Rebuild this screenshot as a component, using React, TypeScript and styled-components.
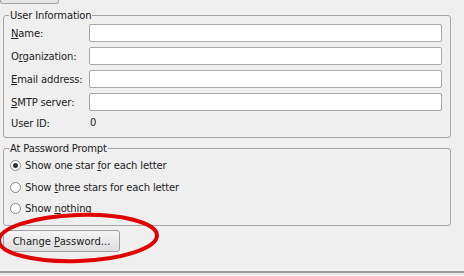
import * as React from 'react';
import styled, { createGlobalStyle } from 'styled-components';

const GlobalStyle = createGlobalStyle`
  html, body {
    margin: 0;
    padding: 0;
    background: #efefef;
  }
  body {
    font-family: "DejaVu Sans", "Liberation Sans", sans-serif;
    font-size: 10px;
    letter-spacing: -0.15px;
    color: #222;
  }
`;

const Page = styled.div`
  position: relative;
  width: 464px;
  height: 276px;
  overflow: hidden;
  display: flex;
  flex-direction: column;
`;

const TopButtonStub = styled.div`
  width: 57px;
  height: 3px;
  border: 1px solid #a4a4a4;
  border-top: none;
  border-radius: 0 0 3px 3px;
  background: #e4e4e4;
  margin-bottom: 5px;
`;

const Group = styled.fieldset<{ $height: number; $gap?: number }>`
  margin: ${(p) => p.$gap ?? 0}px 13px 0 3px;
  padding: 0 8px 0 7px;
  height: ${(p) => p.$height}px;
  box-sizing: border-box;
  border: 1px solid #a6a6a6;
  border-radius: 3px;
  min-width: 0;
`;

const Legend = styled.legend`
  padding: 0 1px;
  margin-left: -2px;
  line-height: 13px;
  font-size: 10px;
`;

const FormGrid = styled.div`
  display: grid;
  grid-template-columns: 78px 1fr;
  row-gap: 5px;
  align-items: center;
  margin-top: 2px;
`;

const Label = styled.span`
  white-space: nowrap;
`;

const TextInput = styled.input`
  height: 18px;
  box-sizing: border-box;
  border: 1px solid #a8a8a8;
  border-radius: 2px;
  background: #fff;
  margin: 0;
  padding: 0 3px;
  font: inherit;
  width: 100%;
`;

const Value = styled.span`
  padding-left: 1px;
  height: 14px;
  line-height: 14px;
`;

const RadioList = styled.div`
  display: flex;
  flex-direction: column;
  gap: 8px;
  margin: 4px 0 0 -1px;
`;

const RadioRow = styled.label`
  display: flex;
  align-items: center;
  gap: 4px;
  height: 13.5px;
`;

const RadioDot = styled.span<{ $checked?: boolean }>`
  width: 11px;
  height: 11px;
  box-sizing: border-box;
  border: 1px solid #8a8a8a;
  border-radius: 50%;
  background: #fff;
  display: flex;
  align-items: center;
  justify-content: center;
  &::after {
    content: '';
    width: 5px;
    height: 5px;
    border-radius: 50%;
    background: ${(p) => (p.$checked ? '#333' : 'transparent')};
  }
`;

const PushButton = styled.button`
  margin: 4px 0 0 3px;
  width: 117px;
  height: 22px;
  border: 1px solid #a0a0a0;
  border-radius: 3px;
  background: linear-gradient(#f4f4f4, #dedede);
  font: inherit;
  color: #222;
  padding: 0;
  text-align: center;
`;

const Spacer = styled.div`
  flex: 1;
`;

const BottomEdge = styled.div`
  height: 2px;
  border-top: 2px solid #9c9c9c;
  background: #e8e8e8;
  margin-bottom: 1px;
`;

const Annotation = styled.svg`
  position: absolute;
  left: 0;
  top: 0;
  pointer-events: none;
`;

const fields = [
  { pre: '', key: 'N', post: 'ame:' },
  { pre: 'O', key: 'r', post: 'ganization:' },
  { pre: '', key: 'E', post: 'mail address:' },
  { pre: '', key: 'S', post: 'MTP server:' },
];

const App = () => (
  <Page>
    <GlobalStyle />
    <TopButtonStub />
    <Group $height={129}>
      <Legend>User Information</Legend>
      <FormGrid>
        {fields.map((f) => (
          <React.Fragment key={f.post}>
            <Label>
              {f.pre}
              <u>{f.key}</u>
              {f.post}
            </Label>
            <TextInput />
          </React.Fragment>
        ))}
        <Label>User ID:</Label>
        <Value>0</Value>
      </FormGrid>
    </Group>
    <Group $height={84} $gap={4}>
      <Legend>At Password Prompt</Legend>
      <RadioList>
        <RadioRow>
          <RadioDot $checked />
          <span>
            Show one star <u>f</u>or each letter
          </span>
        </RadioRow>
        <RadioRow>
          <RadioDot />
          <span>
            Show <u>t</u>hree stars for each letter
          </span>
        </RadioRow>
        <RadioRow>
          <RadioDot />
          <span>
            Show <u>n</u>othing
          </span>
        </RadioRow>
      </RadioList>
    </Group>
    <PushButton>
      Change <u>P</u>assword...
    </PushButton>
    <Spacer />
    <BottomEdge />
    <Annotation width="464" height="276" viewBox="0 0 464 276">
      <ellipse cx="78" cy="238" rx="79" ry="23" fill="none" stroke="#e00000" strokeWidth="4" transform="rotate(-2 78 238)" />
    </Annotation>
  </Page>
);

export default App;
